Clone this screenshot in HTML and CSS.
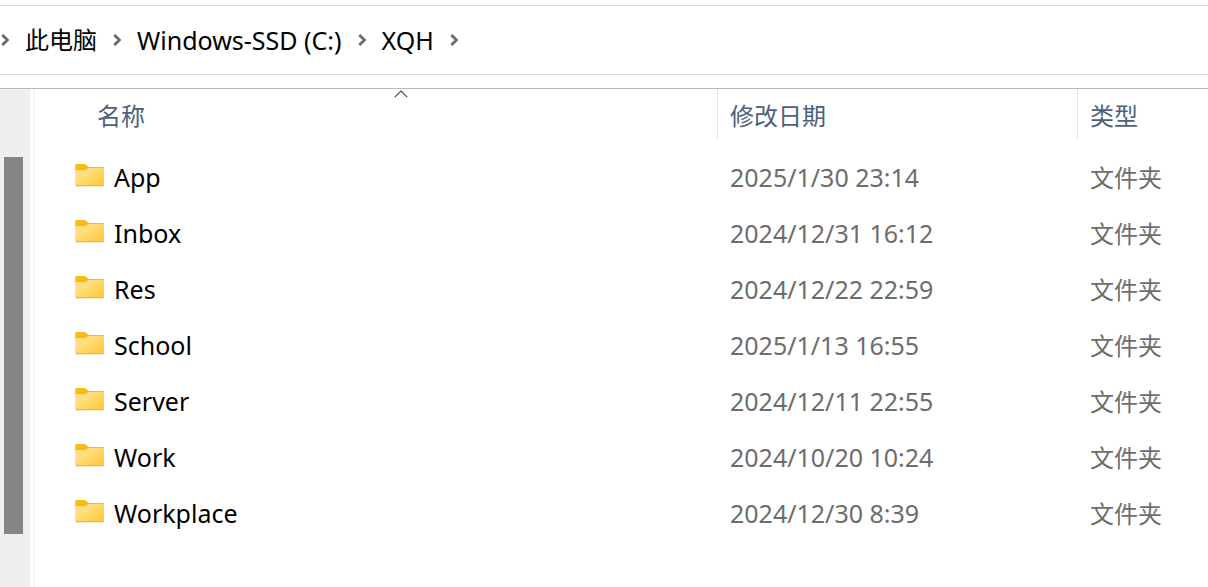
FILE: index.html
```html
<!DOCTYPE html>
<html lang="zh-CN">
<head>
    <meta charset="UTF-8">
    <meta name="viewport" content="width=device-width, initial-scale=1.0">
    <title>XQH</title>
    <link rel="stylesheet" href="styles.css">
</head>
<body>
    <!-- 图标 -->
    <svg class="sprite" aria-hidden="true">
        <defs>
            <linearGradient id="folderFill" x1="0" y1="0" x2="1" y2="1">
                <stop offset="0" stop-color="#ffe79e"/>
                <stop offset="1" stop-color="#ffc937"/>
            </linearGradient>
            <symbol id="chevron" viewBox="0 0 8 12">
                <path d="M1.3 0.9L6.4 6L1.3 11.1" fill="none" stroke="#6e6e6e" stroke-width="2.8"/>
            </symbol>
            <symbol id="folder" viewBox="0 0 30 26">
                <path d="M0.3 1.2Q0.3 0 1.5 0H9.6Q10.6 0 11.3 0.8L13.5 3H28.2Q29 3 29 4V10H0.3Z" fill="#fbb917"/>
                <path d="M0.3 6.2H9.4Q10.8 6.2 11.8 5.2L12.6 4.4Q13.1 4 13.8 4H29V21.2Q29 22 28.2 22H1.1Q0.3 22 0.3 21.2Z" fill="url(#folderFill)"/>
                <path d="M0.6 21.5H28.7" stroke="#f3b52e" stroke-width="1"/>
                <path d="M0.6 22.5H28.7" stroke="#faedcf" stroke-width="1"/>
            </symbol>
        </defs>
    </svg>

    <!-- 地址栏 -->
    <nav class="address-bar" aria-label="地址">
        <svg class="chevron"><use href="#chevron"/></svg>
        <a class="crumb-cjk" href="#">此电脑</a>
        <svg class="chevron"><use href="#chevron"/></svg>
        <a href="#">Windows-SSD (C:)</a>
        <svg class="chevron"><use href="#chevron"/></svg>
        <a href="#">XQH</a>
        <svg class="chevron"><use href="#chevron"/></svg>
    </nav>

    <div class="content">
        <div class="scrollbar">
            <div class="thumb"></div>
        </div>

        <!-- 文件列表 -->
        <main class="file-list">
            <table>
                <thead>
                    <tr>
                        <th class="col-name" aria-sort="ascending">
                            <button type="button">名称
                                <svg class="sort-arrow" viewBox="0 0 14 8"><path d="M0.8 7.2L7 1L13.2 7.2" fill="none" stroke="#444" stroke-width="1.1"/></svg>
                            </button>
                        </th>
                        <th class="col-date"><button type="button">修改日期</button></th>
                        <th class="col-type"><button type="button">类型</button></th>
                    </tr>
                </thead>
                <tbody>
                    <tr>
                        <td><a class="file" href="#"><svg class="folder"><use href="#folder"/></svg>App</a></td>
                        <td>2025/1/30 23:14</td>
                        <td class="type">文件夹</td>
                    </tr>
                    <tr>
                        <td><a class="file" href="#"><svg class="folder"><use href="#folder"/></svg>Inbox</a></td>
                        <td>2024/12/31 16:12</td>
                        <td class="type">文件夹</td>
                    </tr>
                    <tr>
                        <td><a class="file" href="#"><svg class="folder"><use href="#folder"/></svg>Res</a></td>
                        <td>2024/12/22 22:59</td>
                        <td class="type">文件夹</td>
                    </tr>
                    <tr>
                        <td><a class="file" href="#"><svg class="folder"><use href="#folder"/></svg>School</a></td>
                        <td>2025/1/13 16:55</td>
                        <td class="type">文件夹</td>
                    </tr>
                    <tr>
                        <td><a class="file" href="#"><svg class="folder"><use href="#folder"/></svg>Server</a></td>
                        <td>2024/12/11 22:55</td>
                        <td class="type">文件夹</td>
                    </tr>
                    <tr>
                        <td><a class="file" href="#"><svg class="folder"><use href="#folder"/></svg>Work</a></td>
                        <td>2024/10/20 10:24</td>
                        <td class="type">文件夹</td>
                    </tr>
                    <tr>
                        <td><a class="file" href="#"><svg class="folder"><use href="#folder"/></svg>Workplace</a></td>
                        <td>2024/12/30 8:39</td>
                        <td class="type">文件夹</td>
                    </tr>
                </tbody>
            </table>
        </main>
    </div>
</body>
</html>
```
FILE: styles.css
```css
:root {
    --text-color: #000000;
    --muted-color: #6d6d6d;
    --header-color: #4c607a;
    --line-color: #d9d9d9;
}

* {
    box-sizing: border-box;
}

body {
    margin: 0;
    padding-top: 5px;
    min-height: 100vh;
    display: flex;
    flex-direction: column;
    background-color: #ffffff;
    color: var(--text-color);
    font-family: "Noto Sans", "Noto Sans CJK SC", sans-serif;
    font-size: 25px;
    line-height: 32px;
}

a {
    color: inherit;
    text-decoration: none;
}

.sprite {
    position: absolute;
    width: 0;
    height: 0;
}

/* 地址栏 */
.address-bar {
    display: flex;
    align-items: center;
    gap: 16px;
    height: 70px;
    padding-left: 1px;
    border-top: 1px solid var(--line-color);
    border-bottom: 1px solid var(--line-color);
    white-space: nowrap;
}

.crumb-cjk {
    font-size: 24px;
}

.chevron {
    flex: none;
    width: 8px;
    height: 12px;
}

.content {
    flex: 1;
    display: flex;
    margin-top: 13px;
    border-top: 1px solid #b9b9b9;
}

/* 滚动条 */
.scrollbar {
    flex: none;
    display: flex;
    flex-direction: column;
    width: 30px;
    margin-right: 3px;
    padding: 68px 7px 53px 4px;
    background-color: #efefef;
}

.thumb {
    flex: 1;
    background-color: #858585;
}

.file-list {
    flex: 1;
    border-left: 2px solid #f7f7f7;
}

table {
    width: 100%;
    table-layout: fixed;
    border-collapse: collapse;
}

th {
    height: 60px;
    padding: 0;
    vertical-align: top;
}

.col-name {
    padding-left: 50px;
}

.col-date {
    width: 360px;
}

.col-type {
    width: 131px;
}

th button {
    position: relative;
    display: block;
    width: 100%;
    height: 51px;
    padding: 2px 12px 0;
    border: none;
    background: none;
    color: var(--header-color);
    font: inherit;
    font-size: 24px;
    font-weight: 400;
    text-align: left;
    cursor: pointer;
}

.col-date button,
.col-type button {
    border-left: 1px solid #e5e5e5;
}

.sort-arrow {
    position: absolute;
    top: 1px;
    left: 50%;
    width: 14px;
    height: 8px;
    transform: translateX(-50%);
}

td {
    height: 56px;
    padding: 0 0 0 13px;
    color: var(--muted-color);
    white-space: nowrap;
}

td:first-child {
    padding-left: 40px;
}

.type {
    padding-top: 2px;
    font-size: 24px;
}

.file {
    display: flex;
    align-items: center;
    gap: 9px;
    color: var(--text-color);
}

.folder {
    flex: none;
    width: 30px;
    height: 26px;
}
```
